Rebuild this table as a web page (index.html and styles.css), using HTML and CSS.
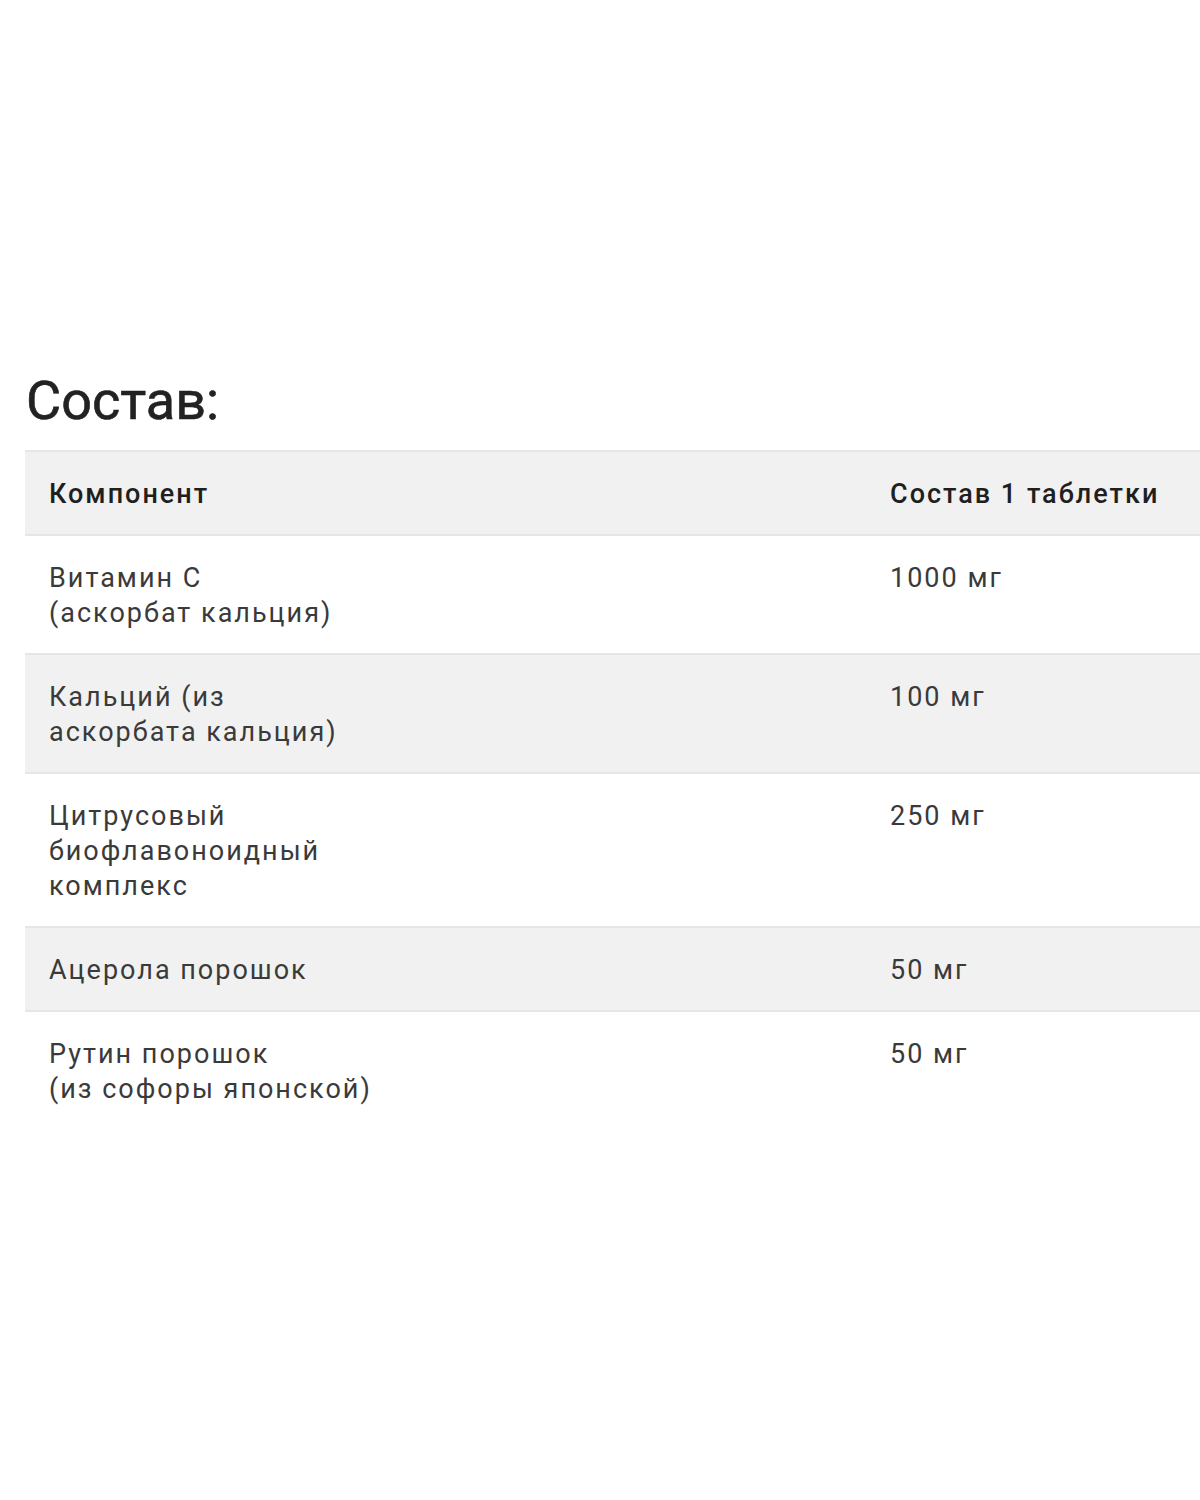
FILE: index.html
```html
<!DOCTYPE html>
<html lang="ru">
<head>
    <meta charset="UTF-8">
    <meta name="viewport" content="width=device-width, initial-scale=1.0">
    <title>Состав</title>
    <link rel="stylesheet" href="styles.css">
</head>
<body>
    <div class="sostav">
        <h2 class="titulo">Состав:</h2>

        <table class="tabela">
            <thead>
                <tr>
                    <th class="col-nome">Компонент</th>
                    <th>Состав 1 таблетки</th>
                </tr>
            </thead>
            <tbody>
                <tr>
                    <td>Витамин С<br>(аскорбат кальция)</td>
                    <td>1000 мг</td>
                </tr>
                <tr class="cinza">
                    <td>Кальций (из<br>аскорбата кальция)</td>
                    <td>100 мг</td>
                </tr>
                <tr>
                    <td>Цитрусовый<br>биофлавоноидный<br>комплекс</td>
                    <td>250 мг</td>
                </tr>
                <tr class="cinza">
                    <td>Ацерола порошок</td>
                    <td>50 мг</td>
                </tr>
                <tr>
                    <td>Рутин порошок<br>(из софоры японской)</td>
                    <td>50 мг</td>
                </tr>
            </tbody>
        </table>
    </div>
</body>
</html>
```

FILE: styles.css
```css
body {
    margin: 0;
    background-color: #fff;
    font-family: Roboto, 'Liberation Sans', sans-serif;
    color: #3a3a3a;
}

.sostav {
    padding: 366px 0 0 25px;
    overflow: hidden;
}

.titulo {
    font-size: 54px;
    font-weight: 400;
    color: #222;
    margin: 0 0 14px 1px;
    line-height: 70px;
    -webkit-text-stroke: 0.6px #222;
}

.tabela {
    width: 1200px;
    border-collapse: collapse;
    font-size: 27px;
    line-height: 35px;
    letter-spacing: 2px;
}

.tabela th,
.tabela td {
    text-align: left;
    vertical-align: top;
    padding: 25px 24px 22px 24px;
    border-bottom: 2px solid #e6e6e6;
}

.tabela th {
    font-weight: 500;
    color: #1f1f1f;
    background-color: #f1f1f1;
    border-top: 2px solid #e6e6e6;
}

.col-nome {
    width: 793px;
}

.cinza td {
    background-color: #f1f1f1;
}

.tabela tbody tr:last-child td {
    border-bottom: none;
}
```
